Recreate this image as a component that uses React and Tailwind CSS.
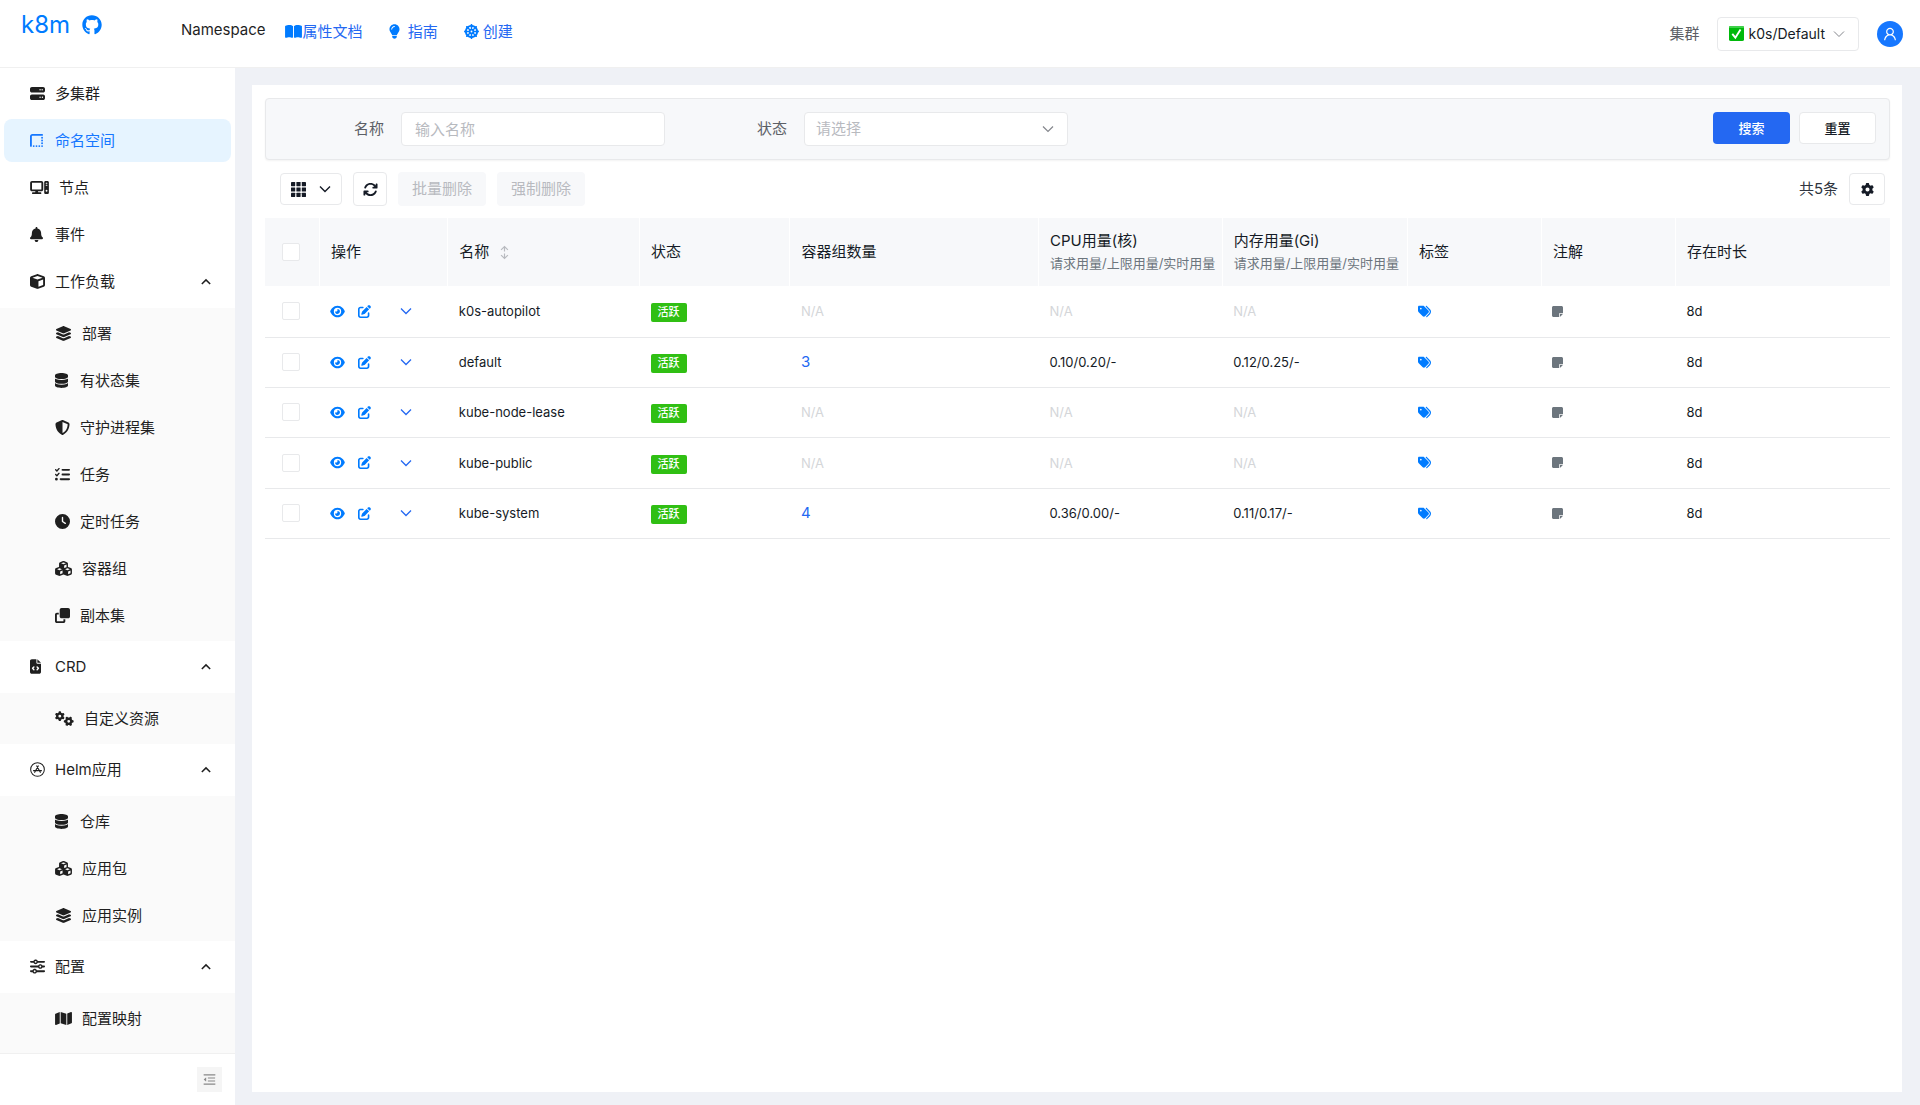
import React, { useState } from 'react';
import {
  FaServer, FaComputer, FaBell, FaCube, FaLayerGroup, FaDatabase, FaShieldHalved, FaListCheck,
  FaClock, FaCubes, FaClone, FaFileCode, FaGears, FaSliders, FaMap, FaEye, FaPenToSquare,
  FaTags, FaNoteSticky, FaBookOpen, FaLightbulb, FaDharmachakra, FaArrowsRotate, FaBorderTopLeft,
  FaGear, FaGithub,
} from 'react-icons/fa6';
import { AiOutlineUser, AiOutlineMenuFold } from 'react-icons/ai';

const menu = [
  { label: '多集群', icon: FaServer },
  { label: '命名空间', icon: FaBorderTopLeft, size: 'w-[13px]', active: true },
  { label: '节点', icon: FaComputer, size: 'w-[19px]' },
  { label: '事件', icon: FaBell, size: 'w-[13px]' },
  {
    label: '工作负载',
    icon: FaCube,
    children: [
      { label: '部署', icon: FaLayerGroup, size: 'w-[17px]' },
      { label: '有状态集', icon: FaDatabase, size: 'w-[13px]' },
      { label: '守护进程集', icon: FaShieldHalved },
      { label: '任务', icon: FaListCheck },
      { label: '定时任务', icon: FaClock },
      { label: '容器组', icon: FaCubes, size: 'w-[17px]' },
      { label: '副本集', icon: FaClone },
    ],
  },
  {
    label: 'CRD',
    icon: FaFileCode,
    size: 'w-[11px]',
    children: [{ label: '自定义资源', icon: FaGears, size: 'w-[19px]' }],
  },
  {
    label: 'Helm应用',
    icon: HelmIcon,
    children: [
      { label: '仓库', icon: FaDatabase, size: 'w-[13px]' },
      { label: '应用包', icon: FaCubes, size: 'w-[17px]' },
      { label: '应用实例', icon: FaLayerGroup, size: 'w-[17px]' },
    ],
  },
  { label: '配置', icon: FaSliders, children: [{ label: '配置映射', icon: FaMap, size: 'w-[17px]' }] },
];

const rows = [
  { name: 'k0s-autopilot', pods: null, cpu: null, mem: null, age: '8d' },
  { name: 'default', pods: 3, cpu: '0.10/0.20/-', mem: '0.12/0.25/-', age: '8d' },
  { name: 'kube-node-lease', pods: null, cpu: null, mem: null, age: '8d' },
  { name: 'kube-public', pods: null, cpu: null, mem: null, age: '8d' },
  { name: 'kube-system', pods: 4, cpu: '0.36/0.00/-', mem: '0.11/0.17/-', age: '8d' },
];

function HelmIcon({ className }) {
  return (
    <svg viewBox="0 0 16 16" className={className} fill="none" stroke="currentColor" strokeLinecap="round">
      <circle cx="8" cy="8" r="7.3" strokeWidth="1.1" />
      <path d="M8.8 4.2 5 11M7.2 4.2 11 11M3.8 9.2h5M10.2 9.2h2" strokeWidth="1.2" />
    </svg>
  );
}

function Chevron({ className }) {
  return (
    <svg viewBox="0 0 12 12" className={className} fill="none" stroke="currentColor">
      <path d="M1 3.5 6 8.5 11 3.5" />
    </svg>
  );
}

function MenuItem({ item, nested }) {
  const Icon = item.icon;
  return (
    <a
      href="#"
      className={`mx-1 flex h-[43px] items-center gap-[10px] rounded-lg pr-5 ${nested ? 'pl-[51px]' : 'pl-[26px]'} ${
        item.active ? 'bg-[#e6f4ff] text-[#1677ff]' : 'text-[#1f1f1f]'
      }`}
    >
      <span className="flex min-w-[15px]">
        <Icon className={`h-[15px] ${item.size || 'w-[15px]'}`} />
      </span>
      <span className="flex-1">{item.label}</span>
      {item.children && <Chevron className="size-[10px] rotate-180 stroke-[1.8]" />}
    </a>
  );
}

function Sidebar() {
  return (
    <aside className="flex w-[235px] shrink-0 flex-col bg-white">
      <nav className="flex min-h-0 flex-1 flex-col gap-1 overflow-hidden pt-1">
        {menu.map((item) => (
          <div key={item.label} className="last:flex last:flex-1 last:flex-col">
            <MenuItem item={item} />
            {item.children && (
              <div className="mt-[5px] flex flex-1 flex-col gap-1 bg-[#fafafa] py-1">
                {item.children.map((child) => (
                  <MenuItem key={child.label} item={child} nested />
                ))}
              </div>
            )}
          </div>
        ))}
      </nav>
      <div className="flex h-[52px] items-center justify-end border-t border-[#f0f0f0] pr-[13px]">
        <button aria-label="收起菜单" className="flex size-[25px] items-center justify-center bg-[#f5f5f5] text-[#888]">
          <AiOutlineMenuFold className="size-[15px]" />
        </button>
      </div>
    </aside>
  );
}

function Header() {
  return (
    <header className="flex h-[68px] shrink-0 items-center border-b border-[#f0f0f0] bg-white pl-[21px] pr-[17px]">
      <a href="#" className="mb-[18px] flex w-[160px] items-center gap-3 text-2xl text-[#007bff]">
        k8m
        <FaGithub className="size-5" />
      </a>
      <span className="mb-2 text-[#1f1f1f]">Namespace</span>
      <nav className="mb-1 ml-[19px] flex items-center gap-[26px] text-[#2468f2]">
        <a href="#" className="flex items-center gap-px">
          <FaBookOpen className="h-[15px] w-[17px] text-[#007bff]" />
          属性文档
        </a>
        <a href="#" className="flex items-center gap-2">
          <FaLightbulb className="h-[15px] w-[11px] text-[#007bff]" />
          指南
        </a>
        <a href="#" className="flex items-center gap-1">
          <FaDharmachakra className="size-[15px] text-[#007bff]" />
          创建
        </a>
      </nav>
      <div className="ml-auto flex items-center">
        <span className="text-[#5c5f66]">集群</span>
        <button className="ml-[17px] flex h-[34px] items-center rounded border border-[#e8e9eb] px-[11px] text-sm text-[#151b26]">
          <GreenCheck />
          <span className="ml-[5px]">k0s/Default</span>
          <Chevron className="ml-2 mr-[2px] size-3 text-[#84868c]" />
        </button>
        <button aria-label="用户" className="ml-[18px] flex size-[26px] items-center justify-center rounded-full bg-[#1677ff] text-white">
          <AiOutlineUser className="size-4" />
        </button>
      </div>
    </header>
  );
}

function GreenCheck() {
  return (
    <svg viewBox="0 0 16 16" className="size-[15px]">
      <rect width="16" height="16" rx="2" fill="#00b90b" />
      <rect width="16" height="2" rx="1" fill="#3fd14a" />
      <path d="M3.5 8.5 6.8 12.5 12.3 3.8" fill="none" stroke="#fff" strokeWidth="2" />
    </svg>
  );
}

function FilterForm({ status, setStatus }) {
  return (
    <form className="flex h-[62px] items-center rounded border border-[#e8e9eb] bg-[#f7f8fa] pl-[88px] pr-[13px] shadow-xs">
      <label htmlFor="name" className="mr-[17px] text-[#5c5f66]">名称</label>
      <input
        id="name"
        placeholder="输入名称"
        className="h-[34px] w-[264px] rounded border border-[#e8e9eb] bg-white px-[13px] outline-none placeholder:text-[#b8babf]"
      />
      <label htmlFor="status" className="ml-[92px] mr-[17px] text-[#5c5f66]">状态</label>
      <div className="relative">
        <select
          id="status"
          value={status}
          onChange={(e) => setStatus(e.target.value)}
          className="h-[34px] w-[264px] appearance-none rounded border border-[#e8e9eb] bg-white px-[11px] text-[#b8babf] outline-none"
        >
          <option value="">请选择</option>
          <option value="active">活跃</option>
        </select>
        <Chevron className="pointer-events-none absolute right-[14px] top-[11px] size-3 stroke-[1.2] text-[#84868c]" />
      </div>
      <div className="ml-auto flex gap-[9px] pb-[2px] text-[13px] font-medium">
        <button type="button" className="h-8 w-[77px] rounded bg-[#2468f2] text-white">搜索</button>
        <button type="reset" className="h-8 w-[77px] rounded border border-[#e8e9eb] bg-white text-[#151b26]">重置</button>
      </div>
    </form>
  );
}

function Toolbar() {
  return (
    <div className="flex h-[58px] items-center pl-[15px] pr-[5px]">
      <button aria-label="显示列" className="flex h-8 w-[62px] items-center justify-center gap-[13px] rounded border border-[#e8e9eb] text-[#151b26]">
        <svg viewBox="0 0 15 15" className="size-[15px]" fill="currentColor">
          {[0, 5.4, 10.8].map((y) => [0, 5.4, 10.8].map((x) => <rect key={`${x}-${y}`} x={x} y={y} width="4.2" height="4.2" rx="0.4" />))}
        </svg>
        <Chevron className="size-3 stroke-[1.4]" />
      </button>
      <button aria-label="刷新" className="ml-[11px] flex size-[34px] items-center justify-center rounded border border-[#e8e9eb] text-[#151b26]">
        <FaArrowsRotate className="size-[15px]" />
      </button>
      <button disabled className="ml-[11px] h-[34px] rounded bg-[#f7f8fa] px-[14px] text-[#b8babf]">批量删除</button>
      <button disabled className="ml-[11px] h-[34px] rounded bg-[#f7f8fa] px-[14px] text-[#b8babf]">强制删除</button>
      <span className="ml-auto text-[#303540]">共5条</span>
      <button aria-label="设置" className="ml-[11px] flex h-8 w-9 items-center justify-center rounded border border-[#e8e9eb] text-[#151b26]">
        <FaGear className="size-[13px]" />
      </button>
    </div>
  );
}

function Checkbox({ label }) {
  return (
    <input
      type="checkbox"
      aria-label={label}
      className="block size-[18px] appearance-none rounded-xs border border-[#e8e9eb] bg-white checked:bg-[#2468f2]"
    />
  );
}

function Usage({ value }) {
  return value ? <>{value}</> : <span className="text-[#d4d6d9]">N/A</span>;
}

function NamespaceTable() {
  const th = 'border-l border-white px-[11px] text-left font-normal';
  return (
    <table className="w-full table-fixed border-collapse text-[#151b26]">
      <colgroup>
        <col className="w-[3.35%]" />
        <col className="w-[7.9%]" />
        <col className="w-[11.8%]" />
        <col className="w-[9.25%]" />
        <col className="w-[15.3%]" />
        <col className="w-[11.3%]" />
        <col className="w-[11.4%]" />
        <col className="w-[8.25%]" />
        <col className="w-[8.25%]" />
        <col />
      </colgroup>
      <thead>
        <tr className="h-[68px] bg-[#f7f8fa]">
          <th className="pl-[17px]"><Checkbox label="全选" /></th>
          <th className={th}>操作</th>
          <th className={th}>
            <div className="flex items-center gap-[11px]">
              名称
              <svg viewBox="0 0 10 16" className="h-[15px] w-[9px] text-[#b8babf]" fill="none" stroke="currentColor" strokeWidth="1.3">
                <path d="M5 6.8V2M1.2 5 5 1.4 8.8 5M5 9.2V14M1.2 11 5 14.6 8.8 11" />
              </svg>
            </div>
          </th>
          <th className={th}>状态</th>
          <th className={th}>容器组数量</th>
          <th className={th}>
            CPU用量(核)
            <div className="whitespace-nowrap text-[13px] text-[#6c757d]">请求用量/上限用量/实时用量</div>
          </th>
          <th className={th}>
            内存用量(Gi)
            <div className="whitespace-nowrap text-[13px] text-[#6c757d]">请求用量/上限用量/实时用量</div>
          </th>
          <th className={th}>标签</th>
          <th className={th}>注解</th>
          <th className={th}>存在时长</th>
        </tr>
      </thead>
      <tbody className="text-[13px]">
        {rows.map((row) => (
          <tr key={row.name} className="h-[50px] border-b border-[#e8e9eb] nth-[3n+1]:h-[51px]">
            <td className="pl-[17px]"><Checkbox label={row.name} /></td>
            <td className="px-[11px]">
              <div className="flex items-center text-[#007bff]">
                <button aria-label="查看"><FaEye className="h-[13px] w-[15px]" /></button>
                <button aria-label="编辑" className="ml-[13px]"><FaPenToSquare className="size-[13px]" /></button>
                <button aria-label="更多" className="ml-[29px] text-[#2468f2]"><Chevron className="size-3 stroke-[1.3]" /></button>
              </div>
            </td>
            <td className="px-[11px]">{row.name}</td>
            <td className="px-[11px]">
              <span className="inline-block rounded-xs bg-[#30bf13] px-[7px] text-[11px] font-medium leading-[19px] text-white">活跃</span>
            </td>
            <td className="px-[11px]">
              {row.pods ? <a href="#" className="text-[15px] text-[#2468f2]">{row.pods}</a> : <Usage />}
            </td>
            <td className="px-[11px]"><Usage value={row.cpu} /></td>
            <td className="px-[11px]"><Usage value={row.mem} /></td>
            <td className="px-[11px]">
              <button aria-label="标签" className="block text-[#007bff]"><FaTags className="size-[13px]" /></button>
            </td>
            <td className="px-[11px]">
              <button aria-label="注解" className="block text-[#6c757d]"><FaNoteSticky className="h-[13px] w-[11px]" /></button>
            </td>
            <td className="px-[11px]">{row.age}</td>
          </tr>
        ))}
      </tbody>
    </table>
  );
}

export default function App() {
  const [status, setStatus] = useState('');

  return (
    <div className="flex h-screen flex-col bg-[#eff1f6] font-[Inter,'Noto_Sans_CJK_SC',sans-serif] text-[15px] leading-[22px]">
      <Header />
      <div className="flex min-h-0 flex-1">
        <Sidebar />
        <main className="mb-[13px] ml-[17px] mr-[18px] mt-[17px] min-w-0 flex-1 bg-white pl-[13px] pr-3 pt-[13px]">
          <FilterForm status={status} setStatus={setStatus} />
          <Toolbar />
          <NamespaceTable />
        </main>
      </div>
    </div>
  );
}
